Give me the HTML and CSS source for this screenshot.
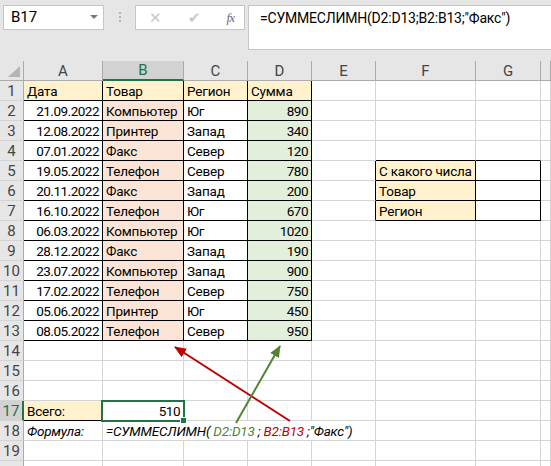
FILE: index.html
```html
<!DOCTYPE html>
<html lang="ru">
<head>
  <meta charset="UTF-8">
  <title>СУММЕСЛИМН</title>
  <link rel="stylesheet" href="styles.css">
</head>
<body>
  <div class="app">
    <div class="formula-bar">
      <div class="name-box">B17<span class="caret"></span></div>
      <div class="grip"><span></span><span></span><span></span></div>
      <div class="fx-buttons">
        <span class="btn-cancel">&#x2715;</span>
        <span class="btn-ok">&#x2714;</span>
        <span class="btn-fx">fx</span>
      </div>
      <div class="formula-input">=СУММЕСЛИМН(D2:D13;B2:B13;"Факс")</div>
    </div>

    <table class="sheet">
      <colgroup>
        <col class="w-hdr"><col class="w-a"><col class="w-b"><col class="w-c"><col class="w-d">
        <col class="w-e"><col class="w-f"><col class="w-g"><col>
      </colgroup>
      <tr class="col-heads">
        <th class="corner"></th><th>A</th><th class="sel">B</th><th>C</th><th>D</th><th>E</th><th>F</th><th>G</th><th></th>
      </tr>
      <tr>
        <th>1</th><td class="b hl-y">Дата</td><td class="b hl-y">Товар</td><td class="b hl-y">Регион</td><td class="b hl-y">Сумма</td><td></td><td></td><td></td><td></td>
      </tr>
      <tr>
        <th>2</th><td class="b num">21.09.2022</td><td class="b hl-p">Компьютер</td><td class="b">Юг</td><td class="b hl-g num">890</td><td></td><td></td><td></td><td></td>
      </tr>
      <tr>
        <th>3</th><td class="b num">12.08.2022</td><td class="b hl-p">Принтер</td><td class="b">Запад</td><td class="b hl-g num">340</td><td></td><td></td><td></td><td></td>
      </tr>
      <tr>
        <th>4</th><td class="b num">07.01.2022</td><td class="b hl-p">Факс</td><td class="b">Север</td><td class="b hl-g num">120</td><td></td><td class="edge-bottom"></td><td class="edge-bottom"></td><td></td>
      </tr>
      <tr>
        <th>5</th><td class="b num">19.05.2022</td><td class="b hl-p">Телефон</td><td class="b">Север</td><td class="b hl-g num">780</td><td class="edge-right"></td><td class="b hl-y">С какого числа</td><td class="b"></td><td></td>
      </tr>
      <tr>
        <th>6</th><td class="b num">20.11.2022</td><td class="b hl-p">Факс</td><td class="b">Запад</td><td class="b hl-g num">200</td><td class="edge-right"></td><td class="b hl-y">Товар</td><td class="b"></td><td></td>
      </tr>
      <tr>
        <th>7</th><td class="b num">16.10.2022</td><td class="b hl-p">Телефон</td><td class="b">Юг</td><td class="b hl-g num">670</td><td class="edge-right"></td><td class="b hl-y">Регион</td><td class="b"></td><td></td>
      </tr>
      <tr>
        <th>8</th><td class="b num">06.03.2022</td><td class="b hl-p">Компьютер</td><td class="b">Юг</td><td class="b hl-g num">1020</td><td></td><td></td><td></td><td></td>
      </tr>
      <tr>
        <th>9</th><td class="b num">28.12.2022</td><td class="b hl-p">Факс</td><td class="b">Запад</td><td class="b hl-g num">190</td><td></td><td></td><td></td><td></td>
      </tr>
      <tr>
        <th>10</th><td class="b num">23.07.2022</td><td class="b hl-p">Компьютер</td><td class="b">Запад</td><td class="b hl-g num">900</td><td></td><td></td><td></td><td></td>
      </tr>
      <tr>
        <th>11</th><td class="b num">17.02.2022</td><td class="b hl-p">Телефон</td><td class="b">Север</td><td class="b hl-g num">750</td><td></td><td></td><td></td><td></td>
      </tr>
      <tr>
        <th>12</th><td class="b num">05.06.2022</td><td class="b hl-p">Принтер</td><td class="b">Юг</td><td class="b hl-g num">450</td><td></td><td></td><td></td><td></td>
      </tr>
      <tr>
        <th>13</th><td class="b num">08.05.2022</td><td class="b hl-p">Телефон</td><td class="b">Север</td><td class="b hl-g num">950</td><td></td><td></td><td></td><td></td>
      </tr>
      <tr>
        <th>14</th><td></td><td></td><td></td><td></td><td></td><td></td><td></td><td></td>
      </tr>
      <tr>
        <th>15</th><td></td><td></td><td></td><td></td><td></td><td></td><td></td><td></td>
      </tr>
      <tr>
        <th>16</th><td></td><td></td><td></td><td></td><td></td><td></td><td></td><td></td>
      </tr>
      <tr>
        <th class="sel-row">17</th><td class="hl-y edge-bottom">Всего:</td><td class="num active">510</td><td></td><td></td><td></td><td></td><td></td><td></td>
      </tr>
      <tr>
        <th>18</th><td class="note">Формула:</td>
        <td class="note" colspan="4">=СУММЕСЛИМН( <span class="ref-green">D2:D13</span> ; <span class="ref-red">B2:B13</span> ;"Факс")</td>
        <td></td><td></td><td></td>
      </tr>
      <tr>
        <th>19</th><td></td><td></td><td></td><td></td><td></td><td></td><td></td><td></td>
      </tr>
      <tr>
        <th></th><td></td><td></td><td></td><td></td><td></td><td></td><td></td><td></td>
      </tr>
    </table>

    <!-- arrows drawn over the sheet -->
    <svg class="arrows" width="551" height="466" viewBox="0 0 551 466">
      <defs>
        <marker id="head-red" markerUnits="userSpaceOnUse" markerWidth="12" markerHeight="10" refX="11" refY="5" orient="auto">
          <path d="M0,0 L12,5 L0,10 z" fill="#c00000"/>
        </marker>
        <marker id="head-green" markerUnits="userSpaceOnUse" markerWidth="12" markerHeight="10" refX="11" refY="5" orient="auto">
          <path d="M0,0 L12,5 L0,10 z" fill="#548235"/>
        </marker>
      </defs>
      <line x1="290" y1="421" x2="175" y2="347" stroke="#c00000" stroke-width="2" marker-end="url(#head-red)"/>
      <line x1="236" y1="423" x2="280" y2="346" stroke="#548235" stroke-width="2" marker-end="url(#head-green)"/>
    </svg>
  </div>
</body>
</html>
```

FILE: styles.css
```css
body {
  margin: 0;
  background: #fff;
  font-family: Roboto, "Liberation Sans", Arial, sans-serif;
  color: #000;
  overflow: hidden;
}
.app {
  position: relative;
  width: 551px;
  height: 466px;
  overflow: hidden;
}

/* Formula bar */
.formula-bar {
  display: flex;
  align-items: flex-start;
  height: 61px;
  box-sizing: border-box;
  padding: 5px 0 0 3px;
  background: #e6e6e6;
}
.name-box {
  position: relative;
  width: 101px;
  height: 25px;
  box-sizing: border-box;
  background: #fff;
  border: 1px solid #c6c6c6;
  padding-left: 7px;
  font-size: 15px;
  line-height: 23px;
}
.caret {
  position: absolute;
  right: 5px;
  top: 9px;
  border-left: 4px solid transparent;
  border-right: 4px solid transparent;
  border-top: 4px solid #7a7a7a;
}
.grip {
  width: 31px;
  display: flex;
  flex-direction: column;
  align-items: center;
  gap: 2px;
  padding-top: 7px;
}
.grip span {
  width: 2px;
  height: 2px;
  background: #b4b4b4;
}
.fx-buttons {
  width: 110px;
  height: 25px;
  box-sizing: border-box;
  background: #fff;
  border: 1px solid #c6c6c6;
  display: flex;
  align-items: center;
  padding: 0 10px 0 13px;
  justify-content: space-between;
}
.btn-cancel, .btn-ok {
  color: #c8c8c8;
  font-size: 15px;
}
.btn-fx {
  color: #6a6a6a;
  font-family: "Liberation Serif", serif;
  font-style: italic;
  font-size: 13px;
  letter-spacing: -1px;
}
.formula-input {
  flex: 1;
  height: 45px;
  margin-left: 3px;
  margin-right: -2px;
  box-sizing: border-box;
  background: #fff;
  border: 1px solid #c6c6c6;
  padding: 3px 0 0 11px;
  font-size: 14px;
  letter-spacing: -0.2px;
  line-height: 19px;
  white-space: nowrap;
}

/* Grid */
.sheet {
  border-collapse: separate;
  border-spacing: 0;
  table-layout: fixed;
  width: 551px;
  font-size: 13.5px;
  letter-spacing: -0.2px;
}
.w-hdr { width: 24px; }
.w-a { width: 79px; }
.w-b { width: 81px; }
.w-c { width: 64px; }
.w-d { width: 64px; }
.w-e { width: 64px; }
.w-f { width: 100px; }
.w-g { width: 65px; }
.sheet tr {
  height: 20px;
}
.sheet td, .sheet th {
  padding: 0 3px;
  box-sizing: border-box;
  border-right: 1px solid #d4d4d4;
  border-bottom: 1px solid #d4d4d4;
  white-space: nowrap;
  overflow: hidden;
  line-height: 18px;
  padding-top: 1px;
  text-align: left;
  font-weight: normal;
}
.sheet th {
  background: #e6e6e6;
  color: #444;
  text-align: center;
  padding: 1px 0 0 0;
  font-size: 15px;
  letter-spacing: 0;
  border-right-color: #ababab;
  border-bottom-color: #d4d4d4;
}
.col-heads {
  height: 19px !important;
}
.col-heads th {
  border-bottom-color: #ababab;
  line-height: 17px;
}
.corner {
  position: relative;
}
.corner::after {
  content: "";
  position: absolute;
  right: 3px;
  bottom: 3px;
  border-left: 12px solid transparent;
  border-bottom: 11px solid #b4b4b4;
}
.sheet th.sel {
  background: #d2d2d2;
  color: #217346;
  border-bottom: 2px solid #217346;
}
.sheet th.sel-row {
  background: #d2d2d2;
  color: #217346;
  border-right: 2px solid #217346;
}

/* Cell formats */
.sheet td.b {
  border-right-color: #000;
  border-bottom-color: #000;
}
.sheet td.edge-bottom {
  border-bottom-color: #000;
}
.sheet td.edge-right {
  border-right-color: #000;
}
.hl-y { background: #fff2cc; }
.hl-p { background: #fce4d6; }
.hl-g { background: #e2efda; }
.sheet td.num {
  text-align: right;
  letter-spacing: -0.5px;
}
.sheet td.note {
  font-style: italic;
  overflow: visible;
}
.ref-green { color: #548235; }
.ref-red { color: #c00000; }

/* Active cell */
.sheet td.active {
  position: relative;
  overflow: visible;
}
.active::before {
  content: "";
  position: absolute;
  left: -2px;
  top: -1px;
  right: -2px;
  bottom: -2px;
  border: 2px solid #217346;
}
.active::after {
  content: "";
  position: absolute;
  right: -4px;
  bottom: -4px;
  width: 5px;
  height: 5px;
  background: #217346;
  border: 1px solid #fff;
}

.arrows {
  position: absolute;
  left: 0;
  top: 0;
  pointer-events: none;
}
```
